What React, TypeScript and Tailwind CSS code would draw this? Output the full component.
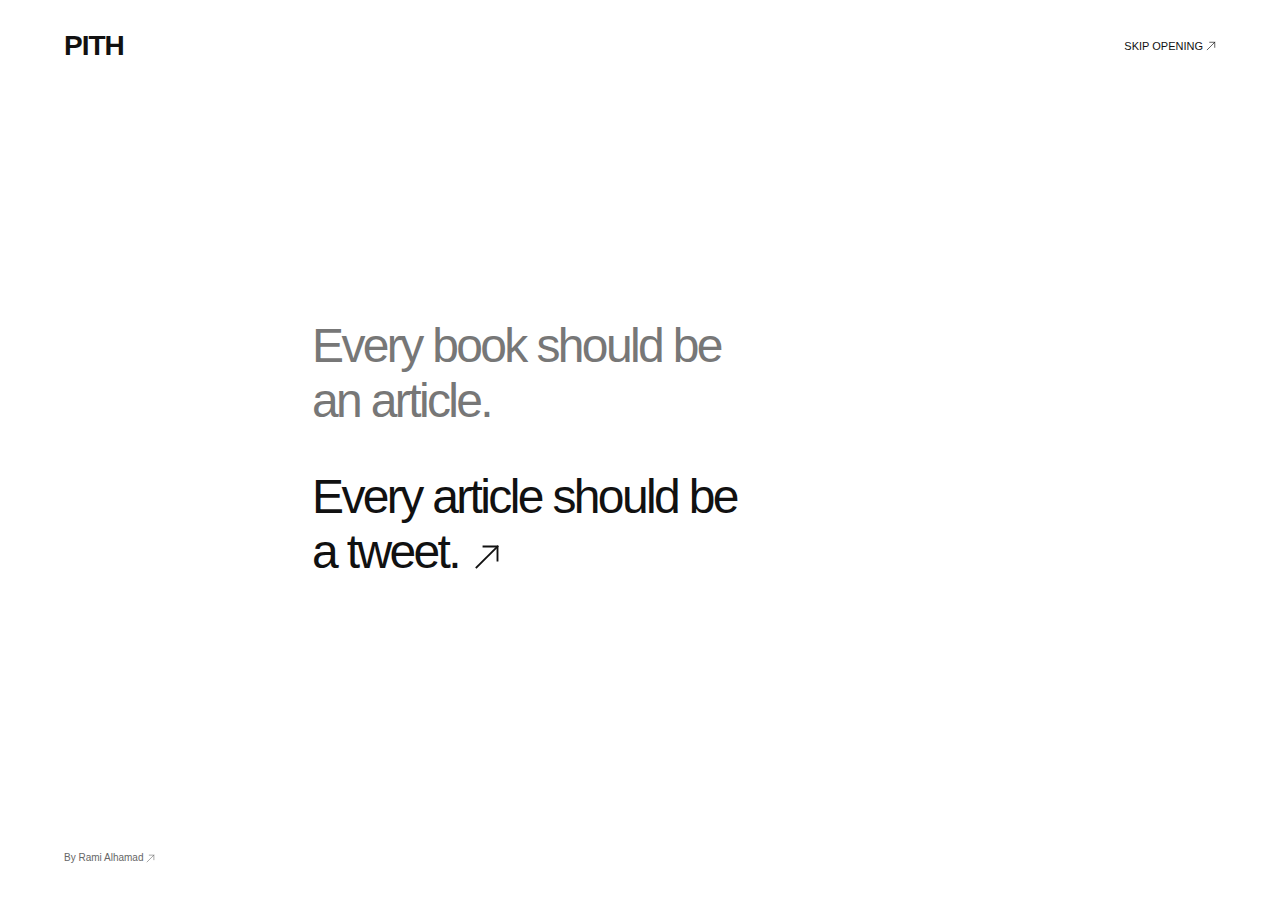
import React from "react";

const ArrowUpRight: React.FC<{ className?: string; strokeWidth?: number }> = ({
  className,
  strokeWidth = 1.5,
}) => (
  <svg
    viewBox="0 0 24 24"
    fill="none"
    stroke="currentColor"
    strokeWidth={strokeWidth}
    strokeLinecap="square"
    className={className}
  >
    <path d="M3 21L21 3" />
    <path d="M9 3h12v12" />
  </svg>
);

const App: React.FC = () => {
  return (
    <div
      className="flex min-h-screen flex-col bg-white text-[#111]"
      style={{ fontFamily: '"Liberation Sans", Arial, sans-serif' }}
    >
      <header className="flex items-center justify-between px-16 pt-[32px]">
        <a href="#" className="text-[28px] font-bold leading-none tracking-[-1px] text-[#111]">
          PITH
        </a>
        <a href="#" className="flex items-center gap-[3px] text-[11px] leading-none text-[#111]">
          SKIP OPENING
          <ArrowUpRight className="h-[10px] w-[10px]" strokeWidth={1.6} />
        </a>
      </header>

      <main className="flex flex-1 items-center pb-[16px] pl-[312px]">
        <div className="text-[48px] leading-[1.15] tracking-[-0.055em]">
          <p className="text-[#777]">
            Every book should be
            <br />
            an article.
          </p>
          <p className="mt-10 text-[#111]">
            Every article should be
            <br />
            <span className="inline-flex items-baseline">
              a tweet.
              <ArrowUpRight className="mb-[8px] ml-[14px] h-[28px] w-[28px] self-end" strokeWidth={1.6} />
            </span>
          </p>
        </div>
      </main>

      <footer className="px-16 pb-[37px]">
        <a href="#" className="flex items-center gap-[3px] text-[10px] leading-none text-[#666]">
          By Rami Alhamad
          <ArrowUpRight className="h-[9px] w-[9px]" strokeWidth={1.5} />
        </a>
      </footer>
    </div>
  );
};

export default App;
